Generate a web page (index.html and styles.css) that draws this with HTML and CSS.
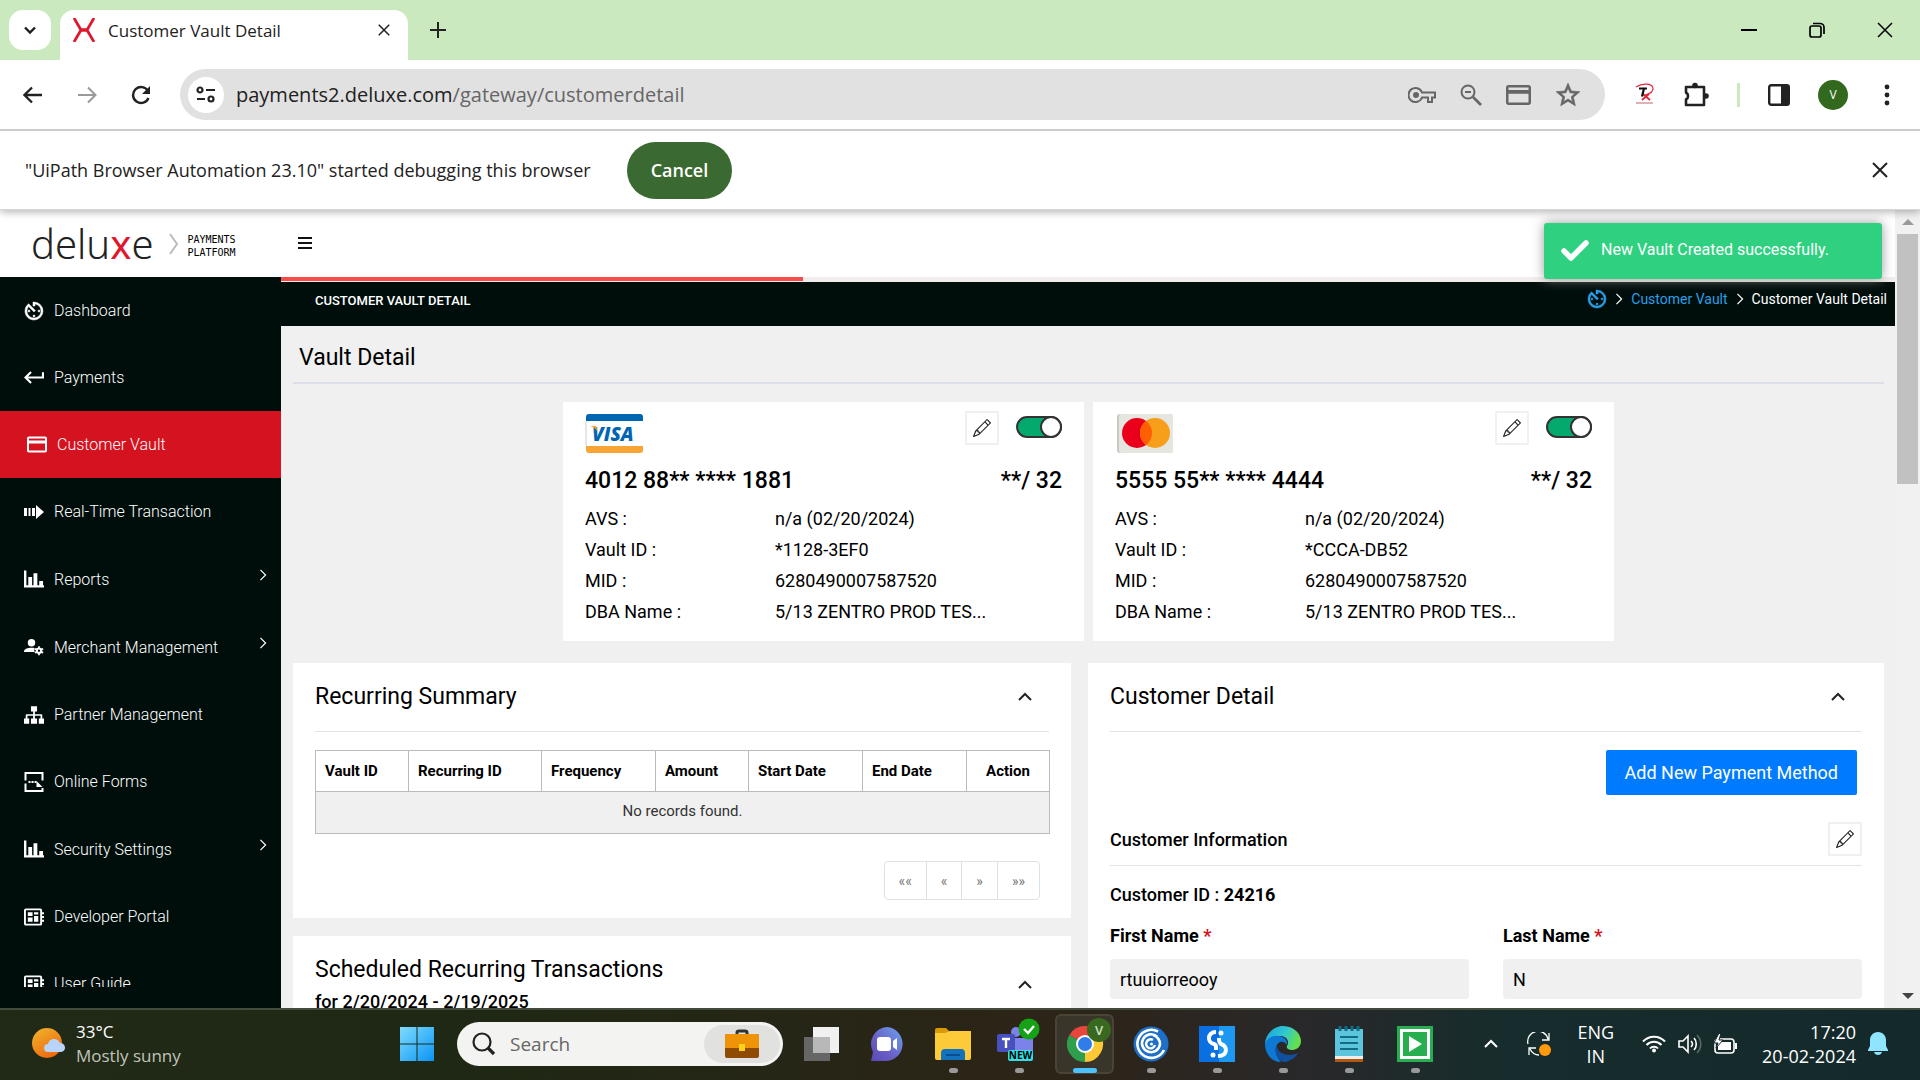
FILE: index.html
```html
<!DOCTYPE html>
<html lang="en">
<head>
<meta charset="utf-8">
<title>Customer Vault Detail</title>
<link rel="stylesheet" href="styles.css">
</head>
<body>
<svg class="defs" aria-hidden="true">
  <symbol id="chev-r" viewBox="0 0 8 14"><path d="M1 1l6 6-6 6" fill="none" stroke="currentColor" stroke-width="1.4"/></symbol>
  <symbol id="chev-u" viewBox="0 0 16 10"><path d="M2 8l6-6 6 6" fill="none" stroke="currentColor" stroke-width="2"/></symbol>
  <symbol id="close" viewBox="0 0 16 16"><path d="M1 1l14 14M15 1L1 15" fill="none" stroke="currentColor" stroke-width="2"/></symbol>
  <symbol id="timer" viewBox="2 2 20 20"><path fill="currentColor" stroke="currentColor" stroke-width=".5" d="M11 17a1 1 0 1 0 2 0 1 1 0 0 0-2 0zm0-14v4h2V5.080c3.390.490 6 3.390 6 6.920 0 3.870-3.130 7-7 7s-7-3.130-7-7c0-1.680.590-3.220 1.580-4.420L12 13l1.410-1.410-6.800-6.800v.020C4.420 6.450 3 9.050 3 12c0 4.970 4.020 9 9 9a9 9 0 0 0 0-18h-1zm7 9a1 1 0 1 0-2 0 1 1 0 0 0 2 0zM6 12a1 1 0 1 0 2 0 1 1 0 0 0-2 0z"/></symbol>
  <symbol id="card" viewBox="2 4 20 16"><path fill="currentColor" d="M20 4H4c-1.110 0-1.990.890-1.990 2L2 18c0 1.110.890 2 2 2h16c1.110 0 2-.890 2-2V6c0-1.110-.890-2-2-2zm0 14H4v-7h16v7zm0-10H4V6h16v2z"/></symbol>
  <symbol id="return" viewBox="2 5 19 14"><path fill="currentColor" d="M19 7v4H5.830l3.580-3.590L8 6l-6 6 6 6 1.410-1.410L5.830 13H21V7z"/></symbol>
  <symbol id="chart" viewBox="0 0 21 18"><path fill="currentColor" d="M0 0h2.500v15.500H21V18H0zM4.500 7h4v8.500h-4zM10 3h4v12.500h-4zM16 11h4v4.500h-4z"/></symbol>
  <symbol id="board" viewBox="0 0 21 18"><path fill="currentColor" fill-rule="evenodd" d="M2 0h15a2 2 0 0 1 2 2v2h2v2h-2v2h2v2h-2v2h2v2h-2v2a2 2 0 0 1-2 2H2a2 2 0 0 1-2-2V2a2 2 0 0 1 2-2zm0 2v14h15V2zM4 4h5v4H4zM4 9.500h5V14H4zM10.500 4H15v2.500h-4.500zM10.500 8H15v6h-4.500z"/></symbol>
  <symbol id="pencil" viewBox="0 0 16 16"><path fill="currentColor" d="M12.146.146a.500.500 0 0 1 .708 0l3 3a.500.500 0 0 1 0 .708l-10 10a.500.500 0 0 1-.168.110l-5 2a.500.500 0 0 1-.650-.650l2-5a.500.500 0 0 1 .110-.168zM11.207 2.500 13.500 4.793 14.793 3.500 12.500 1.207zm1.586 3L10.500 3.207 4 9.707V10h.500a.500.500 0 0 1 .500.500v.500h.500a.500.500 0 0 1 .500.500v.500h.293zm-9.761 5.175-.106.106-1.528 3.821 3.821-1.528.106-.106A.500.500 0 0 1 5 12.500V12h-.500a.500.500 0 0 1-.500-.500V11h-.500a.500.500 0 0 1-.468-.325"/></symbol>
</svg>

<header class="browser">
  <div class="tabstrip">
    <button class="tab-search" aria-label="Search tabs"><svg width="14" height="9" viewBox="0 0 14 9"><path d="M2 1.500l5 5 5-5" fill="none" stroke="#1f1f1f" stroke-width="2.400"/></svg></button>
    <div class="tab">
      <svg width="24" height="24" viewBox="0 0 24 24"><path d="M2 0L9 12 2 24M22 0l-7 12 7 12" fill="none" stroke="#e0182d" stroke-width="2.800"/><path d="M9 12h6" stroke="#e0182d" stroke-width="3.500"/></svg>
      <span class="tab-title">Customer Vault Detail</span>
      <button class="icon-btn" aria-label="Close tab"><svg width="12" height="12"><use href="#close"/></svg></button>
    </div>
    <button class="icon-btn" aria-label="New tab"><svg width="16" height="16" viewBox="0 0 16 16"><path d="M8 0v16M0 8h16" stroke="#222" stroke-width="2"/></svg></button>
    <div class="win-btns">
      <button class="icon-btn" aria-label="Minimize"><svg width="16" height="16" viewBox="0 0 16 16"><path d="M0 8h16" stroke="#000" stroke-width="2"/></svg></button>
      <button class="icon-btn" aria-label="Restore"><svg width="16" height="16" viewBox="0 0 16 16" fill="none" stroke="#000" stroke-width="1.700"><rect x="1" y="4" width="11" height="11" rx="2"/><path d="M4 1.500h7a4 4 0 0 1 4 4V12"/></svg></button>
      <button class="icon-btn" aria-label="Close"><svg width="16" height="16" viewBox="0 0 16 16"><path d="M1 1l14 14M15 1L1 15" stroke="#000" stroke-width="1.500"/></svg></button>
    </div>
  </div>
  <div class="toolbar">
    <button class="icon-btn" aria-label="Back"><svg width="20" height="18" viewBox="0 0 20 18"><path d="M19 9H2M9 1.500L1.500 9 9 16.500" fill="none" stroke="#222" stroke-width="2.300"/></svg></button>
    <button class="icon-btn" aria-label="Forward"><svg width="20" height="18" viewBox="0 0 20 18"><path d="M1 9h17M11 1.500L18.500 9 11 16.500" fill="none" stroke="#999" stroke-width="2"/></svg></button>
    <button class="icon-btn" aria-label="Reload"><svg width="20" height="20" viewBox="0 0 20 20"><path d="M17.500 13A8 8 0 1 1 17 6" fill="none" stroke="#222" stroke-width="2.400"/><path d="M19 1v8h-8z" fill="#222"/></svg></button>
    <div class="omnibox">
      <button class="site-info" aria-label="Site information"><svg width="20" height="18" viewBox="0 0 20 18" fill="none" stroke="#222" stroke-width="2.200"><circle cx="4" cy="4" r="2.500"/><path d="M10 4h9M1 13h8"/><circle cx="15" cy="13" r="2.500"/></svg></button>
      <div class="url">payments2.deluxe.com<span>/gateway/customerdetail</span></div>
      <div class="omni-icons">
        <svg width="28" height="18" viewBox="0 0 28 18" fill="none" stroke="#666" stroke-width="2"><path d="M14 6.500h13v5h-3V16h-4v-4.500h-6A7 7 0 1 1 14 6.500z"/><circle cx="8" cy="9" r="2" fill="#666"/></svg>
        <svg width="22" height="22" viewBox="0 0 22 22" fill="none" stroke="#666" stroke-width="2"><circle cx="8" cy="8" r="6.500"/><path d="M5 8h6"/><path d="M13 13l8 8" stroke-width="2.600"/></svg>
        <svg class="grey" width="25" height="20"><use href="#card"/></svg>
        <svg width="26" height="26" viewBox="1 1 22 22"><path fill="#666" stroke="#666" stroke-width=".6" d="M22 9.240l-7.190-.620L12 2 9.190 8.630 2 9.240l5.460 4.730L5.820 21 12 17.270 18.180 21l-1.630-7.030L22 9.240zM12 15.400l-3.760 2.270 1-4.280-3.320-2.880 4.380-.380L12 6.100l1.710 4.040 4.380.380-3.320 2.880 1 4.280L12 15.400z"/></svg>
      </div>
    </div>
    <div class="ext">
      <svg width="20" height="24" viewBox="0 0 20 24"><path d="M1 4C7 0 17 0 18 5c.500 4-4 6-8 7" fill="none" stroke="#e2263a" stroke-width="1.200"/><path d="M8 11l7 6M14 11l-7 6" stroke="#e2263a" stroke-width="1.800"/><path d="M4 5.500h8M9 5.500l-2 8" stroke="#111" stroke-width="2.200"/><path d="M1 20h17" stroke="#b66"/></svg>
      <svg width="26" height="26" viewBox="0 0 26 26"><path d="M3 5h18v18H3v-5.500a4 4 0 0 0 0-7z" fill="none" stroke="#222" stroke-width="2.600" stroke-linejoin="round"/><circle cx="12" cy="3.500" r="2.800" fill="#222"/><circle cx="23" cy="14" r="2.800" fill="#222"/></svg>
      <i class="ext-sep"></i>
      <svg width="22" height="22" viewBox="0 0 22 22"><rect x="1.200" y="1.200" width="19.600" height="19.600" rx="2" fill="none" stroke="#222" stroke-width="2.400"/><path d="M13 1h8v20h-8z" fill="#222"/></svg>
      <span class="avatar">V</span>
      <svg width="6" height="22" viewBox="0 0 6 22" fill="#222"><circle cx="3" cy="3" r="2.400"/><circle cx="3" cy="11" r="2.400"/><circle cx="3" cy="19" r="2.400"/></svg>
    </div>
  </div>
  <div class="infobar">
    <span>"UiPath Browser Automation 23.10" started debugging this browser</span>
    <button class="cancel">Cancel</button>
    <button class="icon-btn dismiss" aria-label="Dismiss"><svg width="16" height="16"><use href="#close"/></svg></button>
  </div>
</header>

<div class="viewport">
  <div class="site">
    <div class="site-head">
      <div class="logo"><span class="logo-word">delu<b>x</b>e</span><svg width="10" height="22" viewBox="0 0 10 22"><path d="M1 1l7 10-7 10" fill="none" stroke="#bbb" stroke-width="2"/></svg><span class="logo-sub">PAYMENTS<br>PLATFORM</span></div>
      <button class="icon-btn" aria-label="Menu"><svg width="14" height="12" viewBox="0 0 14 12"><path d="M0 1h14M0 6h14M0 11h14" stroke="#111" stroke-width="2"/></svg></button>
    </div>
    <div class="site-body">
      <nav class="sidebar">
        <ul>
          <li><a href="#"><svg width="20" height="20"><use href="#timer"/></svg>Dashboard</a></li>
          <li><a href="#"><svg width="20" height="15"><use href="#return"/></svg>Payments</a></li>
          <li><a href="#" class="active"><svg width="21" height="17"><use href="#card"/></svg>Customer Vault</a></li>
          <li><a href="#"><svg width="20" height="14" viewBox="0 0 20 14"><path fill="#fff" d="M0 3h3v8H0zM4.500 3h2v8h-2zM8 3h3v8H8zM12 0l8 7-8 7z"/></svg>Real-Time Transaction</a></li>
          <li><a href="#" class="parent"><svg width="21" height="18"><use href="#chart"/></svg>Reports<svg class="more" width="8" height="12"><use href="#chev-r"/></svg></a></li>
          <li><a href="#" class="parent"><svg width="24" height="20" viewBox="0 0 24 20" fill="#fff"><circle cx="9" cy="5" r="4.500"/><path d="M0 16c0-4 5-5 9-5 2 0 3 0 4 1-1 1-1 3 0 4z"/><circle cx="18" cy="14.500" r="2.700" fill="none" stroke="#fff" stroke-width="2.600"/><path d="M18 9v2.500M18 17.500V20M13 12l2 1M21 16l2 1M13 17l2-1M21 13l2-1" stroke="#fff" stroke-width="2"/></svg>Merchant Management<svg class="more" width="8" height="12"><use href="#chev-r"/></svg></a></li>
          <li><a href="#"><svg width="23" height="20" viewBox="0 0 23 20"><path fill="#fff" d="M8 0h7v6h-2.500v3H20a1 1 0 0 1 1 1v4h2v6h-6v-6h2v-3h-6.500v3H15v6H8v-6h2.500v-3H4v3h2v6H0v-6h2v-4a1 1 0 0 1 1-1h7.500V6H8z"/></svg>Partner Management</a></li>
          <li><a href="#"><svg width="19" height="20" viewBox="0 0 19 20"><path d="M1 8.500V1h17v7.500M18 16v3H1v-7.500" fill="none" stroke="#fff" stroke-width="2"/><path d="M4 10h8" stroke="#fff" stroke-width="2" stroke-dasharray="2 1"/><path d="M12 9l6 6h-6z" fill="#fff"/></svg>Online Forms</a></li>
          <li><a href="#" class="parent"><svg width="21" height="18"><use href="#chart"/></svg>Security Settings<svg class="more" width="8" height="12"><use href="#chev-r"/></svg></a></li>
          <li><a href="#"><svg width="21" height="18"><use href="#board"/></svg>Developer Portal</a></li>
          <li><a href="#"><svg width="21" height="18"><use href="#board"/></svg>User Guide</a></li>
        </ul>
      </nav>
      <main>
        <div class="progress"><i></i></div>
        <div class="crumbbar">
          <h1>CUSTOMER VAULT DETAIL</h1>
          <div class="crumbs">
            <a href="#" aria-label="Home"><svg width="20" height="20"><use href="#timer"/></svg></a>
            <svg width="8" height="12"><use href="#chev-r"/></svg>
            <a href="#">Customer Vault</a>
            <svg width="8" height="12"><use href="#chev-r"/></svg>
            <span>Customer Vault Detail</span>
          </div>
        </div>
        <div class="content">
          <h2 class="page-title">Vault Detail</h2>
          <div class="cards">
            <section class="pay-card">
              <div class="pay-top">
                <svg width="58" height="40" viewBox="0 0 58 40"><rect width="57" height="39" x="1" rx="3" fill="#fff"/><path d="M1 7V3a3 3 0 0 1 3-3h51a3 3 0 0 1 3 3v4z" fill="#0066b2"/><path d="M1 32h57v4a3 3 0 0 1-3 3H4a3 3 0 0 1-3-3z" fill="#f9a533"/><path d="M1 7v25" stroke="#ccc"/><text x="7" y="27" class="visa">VISA</text><path d="M5 12h6l2 6c-2-3-4-5-8-6z" fill="#f9a533"/></svg>
                <button class="edit" aria-label="Edit card"><svg width="18" height="18"><use href="#pencil"/></svg></button>
                <input type="checkbox" class="toggle" checked aria-label="Card active">
              </div>
              <div class="pay-num"><span>4012 88** **** 1881</span><span>**/ 32</span></div>
              <dl><dt>AVS :</dt><dd>n/a (02/20/2024)</dd><dt>Vault ID :</dt><dd>*1128-3EF0</dd><dt>MID :</dt><dd>6280490007587520</dd><dt>DBA Name :</dt><dd>5/13 ZENTRO PROD TES...</dd></dl>
            </section>
            <section class="pay-card">
              <div class="pay-top">
                <svg width="58" height="40" viewBox="0 0 58 40"><rect x="2" width="56" height="39" rx="3" fill="#c9c9c4"/><rect x="4" width="54" height="39" rx="3" fill="#e6e6e1"/><circle cx="22" cy="19" r="15" fill="#eb001b"/><circle cx="40" cy="19" r="15" fill="#f79e1b"/><path d="M31 7a15 15 0 0 1 0 24 15 15 0 0 1 0-24z" fill="#ff5f00"/></svg>
                <button class="edit" aria-label="Edit card"><svg width="18" height="18"><use href="#pencil"/></svg></button>
                <input type="checkbox" class="toggle" checked aria-label="Card active">
              </div>
              <div class="pay-num"><span>5555 55** **** 4444</span><span>**/ 32</span></div>
              <dl><dt>AVS :</dt><dd>n/a (02/20/2024)</dd><dt>Vault ID :</dt><dd>*CCCA-DB52</dd><dt>MID :</dt><dd>6280490007587520</dd><dt>DBA Name :</dt><dd>5/13 ZENTRO PROD TES...</dd></dl>
            </section>
          </div>
          <div class="columns">
            <div class="col">
              <section class="panel">
                <div class="panel-head"><h2>Recurring Summary</h2><button class="icon-btn" aria-label="Collapse"><svg width="16" height="10"><use href="#chev-u"/></svg></button></div>
                <table>
                  <colgroup><col class="c1"><col class="c2"><col class="c3"><col class="c1"><col class="c3"><col class="c4"><col class="c5"></colgroup>
                  <thead><tr><th>Vault ID</th><th>Recurring ID</th><th>Frequency</th><th>Amount</th><th>Start Date</th><th>End Date</th><th class="mid">Action</th></tr></thead>
                  <tbody><tr><td colspan="7">No records found.</td></tr></tbody>
                </table>
                <div class="pager"><button>««</button><button>«</button><button>»</button><button>»»</button></div>
              </section>
              <section class="panel">
                <div class="panel-head"><div><h2>Scheduled Recurring Transactions</h2><p>for 2/20/2024 - 2/19/2025</p></div><button class="icon-btn" aria-label="Collapse"><svg width="16" height="10"><use href="#chev-u"/></svg></button></div>
              </section>
            </div>
            <div class="col">
              <section class="panel">
                <div class="panel-head"><h2>Customer Detail</h2><button class="icon-btn" aria-label="Collapse"><svg width="16" height="10"><use href="#chev-u"/></svg></button></div>
                <div class="actions"><button class="primary">Add New Payment Method</button></div>
                <div class="sub-head"><h3>Customer Information</h3><button class="edit" aria-label="Edit customer"><svg width="18" height="18"><use href="#pencil"/></svg></button></div>
                <p class="cust-id">Customer ID : <b>24216</b></p>
                <form class="fields">
                  <div><label for="fn">First Name <i>*</i></label><input id="fn" value="rtuuiorreooy" readonly></div>
                  <div><label for="ln">Last Name <i>*</i></label><input id="ln" value="N" readonly></div>
                </form>
              </section>
            </div>
          </div>
        </div>
      </main>
    </div>
    <div class="toast" role="status"><svg width="28" height="22" viewBox="0 0 28 22"><path d="M3 11l7 7L25 3" fill="none" stroke="#fff" stroke-width="5.500" stroke-linejoin="round" stroke-linecap="round"/></svg><span>New Vault Created successfully.</span></div>
  </div>
  <div class="scrollbar">
    <svg width="12" height="6" viewBox="0 0 12 6"><path d="M0 6l6-6 6 6z" fill="#999"/></svg>
    <i class="thumb"></i>
    <svg width="12" height="6" viewBox="0 0 12 6"><path d="M0 0l6 6 6-6z" fill="#444"/></svg>
  </div>
</div>

<footer class="taskbar">
  <div class="weather">
    <svg width="34" height="32" viewBox="0 0 34 32"><defs><linearGradient id="sun" x1="0" y1="0" x2=".6" y2="1"><stop offset="0" stop-color="#f0b62c"/><stop offset="1" stop-color="#ee6a10"/></linearGradient></defs><circle cx="15" cy="15" r="15" fill="url(#sun)"/><path d="M16 24a4 4 0 0 1 0-8c1-6 10-7 12-1 6 0 7 8 1 9z" fill="#b9d4f8"/></svg>
    <div><div>33°C</div><div class="dim">Mostly sunny</div></div>
  </div>
  <div class="apps">
    <button class="app" aria-label="Start"><svg width="36" height="36" viewBox="0 0 36 36"><defs><linearGradient id="win" x1="0" y1="0" x2="1" y2="1"><stop offset="0" stop-color="#7fdcff"/><stop offset="1" stop-color="#0a94f5"/></linearGradient></defs><path d="M1 1h16.500v16.500H1zM18.500 1H35v16.500H18.500zM1 18.500h16.500V35H1zM18.500 18.500H35V35H18.500z" fill="url(#win)"/></svg></button>
    <div class="search">
      <svg width="24" height="24" viewBox="0 0 24 24" fill="none" stroke="#222" stroke-width="2.200"><circle cx="10" cy="10" r="8.500"/><path d="M16 16l6 6" stroke-width="3.200"/></svg>
      <input type="text" placeholder="Search" aria-label="Search">
      <span class="search-art"><svg width="34" height="30" viewBox="0 0 34 30"><path d="M12 6V3.500C12 2 13 2 14 2h6c1 0 2 0 2 1.500V6" fill="none" stroke="#333" stroke-width="3"/><rect y="5" width="34" height="24" rx="2" fill="#8f4a04"/><path d="M0 19V7a2 2 0 0 1 2-2h30a2 2 0 0 1 2 2v12z" fill="#ef9309"/><rect x="14" y="15" width="6" height="7" fill="#fbd31c"/></svg></span>
    </div>
    <button class="app" aria-label="Task view"><svg width="36" height="36" viewBox="0 0 36 36"><path d="M1 11h26v24H1z" fill="#666"/><path d="M10 1h26v26H10z" fill="#f1f1f1"/><path d="M10 11h17v16H10z" fill="#b8b8b8"/></svg></button>
    <button class="app" aria-label="Chat"><svg width="34" height="36" viewBox="0 0 34 36"><defs><linearGradient id="chat" x1="0" y1="1" x2="1" y2="0"><stop offset="0" stop-color="#5a48b8"/><stop offset=".4" stop-color="#6a5fc4"/><stop offset="1" stop-color="#6aa4f0"/></linearGradient></defs><path d="M17 1a16.500 16.500 0 1 1-3 34H1l2-9A17 17 0 0 1 17 1z" fill="url(#chat)"/><rect x="7" y="11" width="14" height="14" rx="3" fill="#fff"/><path d="M23 15l4-3v12l-4-3z" fill="#fff"/></svg></button>
    <button class="app run" aria-label="File Explorer"><svg width="36" height="36" viewBox="0 0 36 36"><path d="M0 4a2 2 0 0 1 2-2h9l4 4v5H0z" fill="#d99a06"/><path d="M0 7h10l5-2h21v27a2 2 0 0 1-2 2H2a2 2 0 0 1-2-2z" fill="#fdcb3a"/><path d="M6 34v-7a4 4 0 0 1 4-4h16a4 4 0 0 1 4 4v7z" fill="#1272bd"/><path d="M11 29h14" stroke="#0a4f8c" stroke-width="2"/></svg></button>
    <button class="app run" aria-label="Teams"><svg width="44" height="44" viewBox="0 0 44 44"><circle cx="19" cy="14" r="5" fill="#7b83eb"/><path d="M16 20h20v14H16z" fill="#7b83eb"/><rect y="16" width="18" height="18" rx="2" fill="#4750bd"/><path d="M5 21h8M9 21v9" stroke="#fff" stroke-width="2.400"/><circle cx="32" cy="11" r="10.500" fill="#16a216"/><path d="M27 11l4 4 6-7" fill="none" stroke="#fff" stroke-width="2.400"/><rect x="11" y="32" width="25" height="11" rx="2" fill="#2fe0e6"/><text x="23.500" y="41" class="new">NEW</text></svg></button>
    <button class="app run current" aria-label="Chrome"><svg width="44" height="44" viewBox="0 0 44 44"><path d="M18 26L2.400 17A18 18 0 0 1 33.600 17z" fill="#e8453c"/><path d="M18 26L33.600 17A18 18 0 0 1 18 44z" fill="#fcc934"/><path d="M18 26v18A18 18 0 0 1 2.400 17z" fill="#2f9e4f"/><circle cx="18" cy="26" r="9" fill="#fff"/><circle cx="18" cy="26" r="7" fill="#2f7de9"/><circle cx="32" cy="12" r="12" fill="#38691e"/><text x="32" y="17" class="vbadge">V</text></svg></button>
    <button class="app run" aria-label="Remote"><svg width="36" height="36" viewBox="0 0 36 36" fill="none" stroke="#fff" stroke-width="2.600"><circle cx="18" cy="18" r="17.500" fill="#1f6fc6" stroke="none"/><path d="M25 5.500A14 14 0 1 0 31 24M24 10.500a9 9 0 1 0 3 7.500c0-4-3-8-7-9"/><path d="M20 14a4.500 4.500 0 1 0 2 5" stroke-width="2.400"/><circle cx="18.500" cy="18" r="1.500" fill="#fff" stroke="none"/></svg></button>
    <button class="app run" aria-label="Assistant"><svg width="36" height="36" viewBox="0 0 36 36"><path d="M0 0h36v36H0z" fill="#0a6fe0"/><path d="M20 36V0h16v36z" fill="#1c98f0"/><path d="M17 6c-9 0-9 11-2 12 3 1 2 4 2 6M20 12c0 3 0 5 2 6 7 2 7 12-3 12" fill="none" stroke="#fff" stroke-width="4"/><circle cx="22" cy="7" r="2.500" fill="#fff"/><circle cx="14" cy="29" r="2.500" fill="#fff"/></svg></button>
    <button class="app run" aria-label="Edge"><svg width="36" height="36" viewBox="0 0 36 36"><defs><linearGradient id="ed" x1="0" y1="0" x2="1" y2=".3"><stop offset="0" stop-color="#1aa3dc"/><stop offset=".6" stop-color="#32c8d0"/><stop offset="1" stop-color="#62e04c"/></linearGradient></defs><path d="M18 0c12 0 18 9 18 15 0 7-6 9-9 9-4 0-6-2-5-4 3-4 0-10-7-10C6 10 0 17 0 19 0 9 8 0 18 0z" fill="url(#ed)"/><path d="M0 18c1-5 7-9 14-8 6 1 9 5 8 9-1-2-4-4-7-3-6 3-6 13 1 20C6 36 0 27 0 18z" fill="#0d79d4"/><path d="M12 19c-4 8 2 17 8 17 6-1 11-5 13-9-8 4-21 2-21-8z" fill="#10509e"/></svg></button>
    <button class="app run" aria-label="Notepad"><svg width="30" height="36" viewBox="0 0 30 36"><path d="M1 3h28v27H1z" fill="#5cc5dd"/><path d="M1 30h28v3H1z" fill="#eee"/><path d="M1 33h28v3H1z" fill="#b4560f"/><path d="M6 0v5M12 0v5M18 0v5M24 0v5" stroke="#126c86" stroke-width="3"/><path d="M6 11h18M6 17h18M6 23h18" stroke="#126c86" stroke-width="2"/></svg></button>
    <button class="app run" aria-label="Recorder"><svg width="36" height="36" viewBox="0 0 36 36"><path d="M0 0h36v36H0z" fill="#27ae4e"/><rect x="4.500" y="4.500" width="27" height="27" fill="none" stroke="#fff" stroke-width="3"/><path d="M12 10l13 8-13 8z" fill="#fff"/></svg></button>
  </div>
  <div class="tray">
    <svg width="16" height="10"><use href="#chev-u"/></svg>
    <svg class="sync" width="24" height="24" viewBox="0 0 24 24"><path d="M1 12A10 10 0 0 1 21 7M22 1v7h-7M2 23v-7h7M3 17c2 4 6 6 9 6" fill="none" stroke="#fff" stroke-width="1.300"/><circle cx="18" cy="18" r="6" fill="#ff9a0a"/></svg>
    <div class="lang">ENG<br>IN</div>
    <svg width="24" height="18" viewBox="0 0 24 18" fill="none" stroke="#fff" stroke-width="2"><path d="M1 6.500c6-6.500 16-6.500 22 0M4.500 10c4-4.500 11-4.500 15 0M8 13.500c2-2.500 6-2.500 8 0"/><circle cx="12" cy="15.500" r="2" fill="#fff" stroke="none"/></svg>
    <svg width="24" height="20" viewBox="0 0 24 20" fill="none" stroke="#fff" stroke-width="1.600"><path d="M1 7h4l5-5v16l-5-5H1zM13 7c2 2 2 4 0 6M16 4c3 3 3 9 0 12"/><path d="M19 1c5 5 5 13 0 18" stroke="#5b6a68"/></svg>
    <svg width="24" height="20" viewBox="0 0 24 20"><rect x="1" y="5" width="19" height="14" rx="3" fill="none" stroke="#fff" stroke-width="1.600"/><rect x="4" y="8" width="13" height="8" fill="#fff"/><path d="M21 9h2v6h-2z" fill="#fff"/><path d="M5-1L0 9h4L2 14l7-8H5l2-7z" fill="#fff" stroke="#14292b"/></svg>
    <div class="clock">17:20<br>20-02-2024</div>
    <svg width="20" height="24" viewBox="0 0 20 24" fill="#8fe5ff"><path d="M10 0c-5 0-8 4-8 8v6l-2 4v1h20v-1l-2-4V8c0-4-3-8-8-8zM6 20h8c-1 4-7 4-8 0z"/></svg>
  </div>
</footer>
</body>
</html>
```
FILE: styles.css
```css
* { box-sizing: border-box; }
body {
  margin: 0; height: 100vh; display: flex; flex-direction: column; overflow: hidden;
  font-family: Roboto, "Liberation Sans", sans-serif; font-size: 18px; color: #000; background: #fff;
}
h1, h2, h3, p, dl, dd, ul { margin: 0; padding: 0; font-weight: 400; }
ul { list-style: none; }
a { color: inherit; text-decoration: none; }
button, input { font: inherit; color: inherit; margin: 0; }
svg { display: block; flex: none; }
.defs { position: absolute; width: 0; height: 0; }
.icon-btn { border: 0; background: none; padding: 0; display: flex; color: #222; }

/* Browser window */
.browser { font-family: "Open Sans", "Noto Sans", sans-serif; color: #222; flex: none; position: relative; z-index: 2; background: #fff; box-shadow: 0 2px 8px rgba(0, 0, 0, .3); }
.tabstrip { height: 60px; background: #cbe9bf; display: flex; align-items: center; padding-left: 9px; }
.tab-search { width: 42px; height: 40px; border: 0; border-radius: 14px; background: #fff; display: flex; align-items: center; justify-content: center; padding: 0; }
.tab { width: 348px; height: 50px; align-self: flex-end; margin: 0 22px 0 9px; padding: 0 18px 10px 12px; background: #fff; border-radius: 14px 14px 0 0; display: flex; align-items: center; gap: 12px; }
.tab-title { flex: 1; font-size: 17px; }
.tab-title, .infobar span { white-space: nowrap; }
.win-btns { display: flex; gap: 52px; margin-left: auto; padding-right: 27px; }
.toolbar { height: 71px; border-bottom: 2px solid #ccc; display: flex; align-items: center; padding: 0 30px 0 23px; gap: 34px; }
.omnibox { flex: 1; height: 51px; margin: 0 -4px 0 -5px; border-radius: 26px; background: #e1e1e1; display: flex; align-items: center; padding: 0 24px 0 8px; }
.site-info { width: 36px; height: 36px; border: 0; border-radius: 50%; background: #fff; display: flex; align-items: center; justify-content: center; padding: 0; }
.url { flex: 1; margin-left: 12px; font-size: 20px; }
.url span { color: #666; }
.omni-icons { display: flex; align-items: center; gap: 24px; }
.grey { color: #666; }
.ext { display: flex; align-items: center; gap: 28px; }
.ext-sep { width: 3px; height: 24px; background: #cbe9bf; }
.avatar { width: 30px; height: 30px; margin-right: 8px; border-radius: 50%; background: #32691e; color: #fff; font-size: 12px; line-height: 30px; text-align: center; }
.infobar { height: 79px; border-bottom: 1px solid #d5d8d3; display: flex; align-items: center; padding: 0 32px 0 25px; gap: 36px; font-size: 18px; }
.cancel { height: 57px; padding: 0 24px; border: 0; border-radius: 29px; background: #3a6a31; color: #fff; font-weight: 600; }
.dismiss { margin-left: auto; }

/* Site */
.viewport { flex: 1; min-height: 0; display: flex; }
.site { flex: 1; min-width: 0; display: flex; flex-direction: column; position: relative; }
.site-head { height: 67px; flex: none; display: flex; align-items: center; }
.logo { width: 281px; padding: 0 16px 0 31px; display: flex; align-items: center; gap: 8px; }
.logo-word { font: 300 40px/44px "Noto Sans", sans-serif; color: #222; margin-right: 8px; }
.logo-word b { font-weight: 400; color: #e0182d; }
.logo-sub { font: 10px/13px "DejaVu Sans Mono", monospace; padding-top: 4px; }
.site-head .icon-btn { margin-left: 17px; padding-bottom: 2px; }
.site-body { flex: 1; min-height: 0; display: flex; }
.sidebar { width: 281px; flex: none; background: #000e0b; color: #fff; padding-bottom: 21px; display: flex; }
.sidebar ul { flex: 1; overflow: hidden; }
.sidebar a { height: 67px; display: flex; align-items: center; padding: 0 14px 0 54px; font-size: 16px; font-weight: 300; }
.sidebar a > svg:first-child { margin: 0 10px 0 -30px; width: 20px; overflow: visible; }
.sidebar .parent { height: 68px; }
.sidebar .active { background: #d5121f; padding-left: 57px; }
.sidebar .more { margin: 0 0 8px auto; }
main { flex: 1; min-width: 0; display: flex; flex-direction: column; overflow: hidden; background: #f0f0f0; }
.progress { height: 5px; flex: none; background: #f2ecec; }
.progress i { display: block; width: 522px; height: 4px; background: #fa4b4b; }
.crumbbar { height: 44px; flex: none; background: #000e0b; color: #fff; display: flex; justify-content: space-between; align-items: center; padding: 0 8px 8px 34px; }
.crumbbar h1 { font-size: 13px; font-weight: 500; }
.crumbs { display: flex; align-items: center; gap: 8px; font-size: 14px; padding-bottom: 2px; }
.crumbs a { color: #2a9fe8; }
.content { padding: 0 11px 0 12px; }
.page-title { height: 58px; padding: 0 6px; border-bottom: 2px solid #dcdfea; font-size: 23px; line-height: 63px; }
.cards { display: flex; justify-content: center; gap: 9px; margin: 18px 0 22px; }
.pay-card { flex: 0 1 521px; background: #fff; padding: 9px 22px 14px; }
.pay-top { display: flex; align-items: flex-start; height: 52px; }
.pay-top > svg { margin: 3px auto 0 0; }
.visa { font: italic 800 19px "Open Sans", sans-serif; fill: #0066b2; }
.edit { width: 34px; height: 34px; border: 2px solid #f0f0f0; background: #fff; padding: 0; display: flex; align-items: center; justify-content: center; color: #222; }
.toggle { appearance: none; width: 46px; height: 22px; margin: 5px 0 0 17px; border: 2px solid #333; border-radius: 11px; background: #04a96d; display: flex; justify-content: flex-end; }
.toggle::before { content: ""; box-sizing: border-box; width: 22px; height: 22px; margin: -2px; border: 2px solid #333; border-radius: 50%; background: #fff; }
.pay-num { display: flex; justify-content: space-between; font-size: 23px; font-weight: 500; line-height: 36px; margin-bottom: 4px; }
.pay-card dl { display: grid; grid-template-columns: 190px 1fr; line-height: 31px; }
.columns { display: grid; grid-template-columns: 778fr 796fr; gap: 17px; align-items: start; }
.col { display: flex; flex-direction: column; gap: 18px; min-width: 0; }
.panel { background: #fff; padding: 19px 22px 18px; }
.panel-head { display: flex; justify-content: space-between; align-items: center; padding: 0 16px 20px 0; border-bottom: 1px solid #e3e3e3; margin-bottom: 18px; }
.panel-head h2 { font-size: 23px; line-height: 29px; }
.panel-head p { font-weight: 500; line-height: 24px; margin-top: 6px; }
table { width: 100%; table-layout: fixed; border-collapse: collapse; font-size: 15px; }
.c1 { width: 93px; } .c2 { width: 133px; } .c3 { width: 114px; } .c4 { width: 104px; } .c5 { width: 83px; }
th, td { height: 41px; border: 1px solid #bbb; padding: 0 0 0 9px; text-align: left; }
th { font-weight: 700; }
th.mid, td { text-align: center; padding: 0; }
td { height: 42px; background: #f0f0f0; color: #333; padding-bottom: 3px; }
.pager { display: flex; justify-content: flex-end; margin: 27px 9px 0 0; }
.pager button { height: 39px; padding: 0 14px; border: 1px solid #dee2e6; margin-left: -1px; background: #fff; color: #777; font-size: 14px; }
.pager button:first-child { border-radius: 4px 0 0 4px; }
.pager button:last-child { border-radius: 0 4px 4px 0; }
.actions { display: flex; justify-content: flex-end; padding-right: 5px; }
.primary { height: 45px; padding: 0 19px; border: 0; border-radius: 2px; background: #007bff; color: #fff; }
.sub-head { display: flex; justify-content: space-between; align-items: center; padding-bottom: 9px; margin-top: 27px; border-bottom: 1px solid #e3e3e3; }
.sub-head h3 { font-size: 18px; font-weight: 500; }
.cust-id { font-weight: 500; line-height: 24px; margin: 17px 0; }
.fields { display: grid; grid-template-columns: 1fr 1fr; gap: 34px; }
.fields label { display: block; font-weight: 500; line-height: 24px; margin-bottom: 11px; -webkit-text-stroke: 0; }
.fields label { font-weight: 700; }
.fields i { color: #d5121f; font-style: normal; }
.fields input { width: 100%; height: 40px; border: 0; border-radius: 4px; background: #f0f0f0; padding: 0 10px; }
.toast { position: absolute; top: 13px; right: 13px; width: 338px; height: 56px; border-radius: 3px; background: #2fd080; color: #fff; display: flex; align-items: center; gap: 12px; padding: 0 17px; box-shadow: 0 0 12px #999; font-size: 16px; z-index: 1; }
.toast span { padding-bottom: 3px; }
.scrollbar { width: 25px; flex: none; background: #f1f1f1; display: flex; flex-direction: column; align-items: center; padding: 9px 0; }
.thumb { width: 21px; height: 250px; margin: 9px 0 auto; background: #c1c1c1; }

/* Taskbar */
.taskbar { height: 72px; flex: none; border-top: 2px solid #434b3d; background: linear-gradient(90deg, #202a16, #1f2814 25%, #2d2418 56%, #29282a 68%, #172c2c 78%, #14292b); display: flex; align-items: center; color: #fff; font-family: "Open Sans", "Noto Sans", sans-serif; font-size: 18px; line-height: 24px; padding-bottom: 2px; }
.weather { width: 384px; padding-left: 32px; display: flex; align-items: center; gap: 10px; font-size: 17px; }
.dim { color: #c0c4bc; }
.apps { display: flex; align-items: center; height: 100%; }
.app { width: 66px; height: 68px; border: 0; background: none; padding: 0; display: flex; align-items: center; justify-content: center; position: relative; }
.run::after { content: ""; position: absolute; bottom: 5px; left: 29px; width: 9px; height: 5px; border-radius: 3px; background: #999; }
.current::before { content: ""; position: absolute; inset: 4px 4px 4px 3px; border: 2px solid #4a4437; border-radius: 6px; background: #39352a; }
.current svg { position: relative; margin: 0 0 8px 8px; }
.app svg[width="44"] { margin-bottom: 8px; }
.current::after { left: 21px; width: 24px; background: #4cc2ff; }
.search { width: 326px; height: 44px; margin: 0 5px 0 7px; border-radius: 22px; background: #f3f3f1; display: flex; align-items: center; padding: 0 3px 0 15px; }
.search input { flex: 1; min-width: 0; border: 0; background: none; padding: 0 14px; font-size: 19px; outline: 0; }
.search input::placeholder { color: #666; opacity: 1; }
.search-art { width: 76px; height: 38px; border-radius: 19px; background: #e1e1e0; display: flex; align-items: center; justify-content: center; }
.new { font: 700 10px "Open Sans", sans-serif; fill: #000; text-anchor: middle; }
.vbadge { font: 600 13px "Open Sans", sans-serif; fill: #cfe0c4; text-anchor: middle; }
.tray { margin-left: auto; display: flex; align-items: center; gap: 12px; padding-right: 32px; }
.sync { margin: 0 14px 0 16px; }
.lang { text-align: center; margin-right: 16px; }
.clock { text-align: right; margin-left: 12px; }
```
